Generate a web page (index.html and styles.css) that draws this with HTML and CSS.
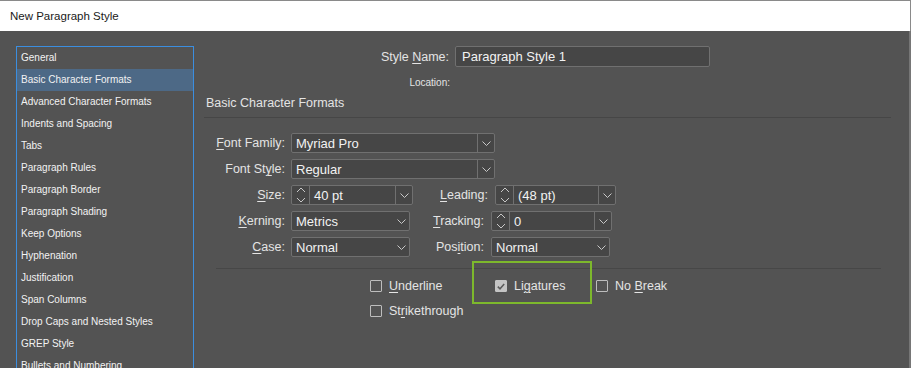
FILE: index.html
```html
<!DOCTYPE html>
<html lang="en">
<head>
    <meta charset="UTF-8">
    <title>New Paragraph Style</title>
    <link rel="stylesheet" href="styles.css">
</head>
<body>
<div class="dialog">
    <div class="titlebar">New Paragraph Style</div>

    <div class="main">
        <!-- left category list -->
        <ul class="nav">
            <li>General</li>
            <li class="sel">Basic Character Formats</li>
            <li>Advanced Character Formats</li>
            <li>Indents and Spacing</li>
            <li>Tabs</li>
            <li>Paragraph Rules</li>
            <li>Paragraph Border</li>
            <li>Paragraph Shading</li>
            <li>Keep Options</li>
            <li>Hyphenation</li>
            <li>Justification</li>
            <li>Span Columns</li>
            <li>Drop Caps and Nested Styles</li>
            <li>GREP Style</li>
            <li>Bullets and Numbering</li>
        </ul>

        <div class="panel">
            <div class="name-row">
                <span class="name-lbl">Style <u>N</u>ame:</span>
                <div class="field name-field">Paragraph Style 1</div>
            </div>
            <div class="loc-row"><span class="loc-lbl">Location:</span></div>

            <div class="heading">Basic Character Formats</div>
            <div class="rule1"></div>

            <div class="form">
                <div class="row">
                    <span class="lbl"><u>F</u>ont Family:</span>
                    <div class="field combo w-wide"><span class="val">Myriad Pro</span><span class="drop split"><svg width="9" height="5" viewBox="0 0 9 5"><path d="M0.5 0.5 L4.5 4.5 L8.5 0.5" fill="none" stroke="#c8c8c8" stroke-width="1"/></svg></span></div>
                </div>
                <div class="row">
                    <span class="lbl">Font St<u>y</u>le:</span>
                    <div class="field combo w-wide"><span class="val">Regular</span><span class="drop split"><svg width="9" height="5" viewBox="0 0 9 5"><path d="M0.5 0.5 L4.5 4.5 L8.5 0.5" fill="none" stroke="#c8c8c8" stroke-width="1"/></svg></span></div>
                </div>
                <div class="row">
                    <span class="lbl"><u>S</u>ize:</span>
                    <div class="field combo w-size">
                        <span class="spin"><svg width="10" height="16" viewBox="0 0 10 16"><path d="M1 5 L5 1 L9 5 M1 11 L5 15 L9 11" fill="none" stroke="#c8c8c8" stroke-width="1"/></svg></span>
                        <span class="val">40 pt</span>
                        <span class="drop split"><svg width="9" height="5" viewBox="0 0 9 5"><path d="M0.5 0.5 L4.5 4.5 L8.5 0.5" fill="none" stroke="#c8c8c8" stroke-width="1"/></svg></span>
                    </div>
                    <span class="lbl2"><u>L</u>eading:</span>
                    <div class="field combo w-lead">
                        <span class="spin"><svg width="10" height="16" viewBox="0 0 10 16"><path d="M1 5 L5 1 L9 5 M1 11 L5 15 L9 11" fill="none" stroke="#c8c8c8" stroke-width="1"/></svg></span>
                        <span class="val">(48 pt)</span>
                        <span class="drop split"><svg width="9" height="5" viewBox="0 0 9 5"><path d="M0.5 0.5 L4.5 4.5 L8.5 0.5" fill="none" stroke="#c8c8c8" stroke-width="1"/></svg></span>
                    </div>
                </div>
                <div class="row">
                    <span class="lbl"><u>K</u>erning:</span>
                    <div class="field combo w-sel"><span class="val">Metrics</span><span class="drop"><svg width="9" height="5" viewBox="0 0 9 5"><path d="M0.5 0.5 L4.5 4.5 L8.5 0.5" fill="none" stroke="#c8c8c8" stroke-width="1"/></svg></span></div>
                    <span class="lbl2 lbl2-b"><u>T</u>racking:</span>
                    <div class="field combo w-lead">
                        <span class="spin"><svg width="10" height="16" viewBox="0 0 10 16"><path d="M1 5 L5 1 L9 5 M1 11 L5 15 L9 11" fill="none" stroke="#c8c8c8" stroke-width="1"/></svg></span>
                        <span class="val">0</span>
                        <span class="drop split"><svg width="9" height="5" viewBox="0 0 9 5"><path d="M0.5 0.5 L4.5 4.5 L8.5 0.5" fill="none" stroke="#c8c8c8" stroke-width="1"/></svg></span>
                    </div>
                </div>
                <div class="row">
                    <span class="lbl"><u>C</u>ase:</span>
                    <div class="field combo w-sel"><span class="val">Normal</span><span class="drop"><svg width="9" height="5" viewBox="0 0 9 5"><path d="M0.5 0.5 L4.5 4.5 L8.5 0.5" fill="none" stroke="#c8c8c8" stroke-width="1"/></svg></span></div>
                    <span class="lbl2 lbl2-b">Pos<u>i</u>tion:</span>
                    <div class="field combo w-sel"><span class="val">Normal</span><span class="drop"><svg width="9" height="5" viewBox="0 0 9 5"><path d="M0.5 0.5 L4.5 4.5 L8.5 0.5" fill="none" stroke="#c8c8c8" stroke-width="1"/></svg></span></div>
                </div>
            </div>

            <div class="rule2"></div>

            <div class="checks">
                <div class="check-row">
                    <label class="chk c1"><span class="box"></span><span><u>U</u>nderline</span></label>
                    <label class="chk c2"><span class="box on"><svg width="8" height="7" viewBox="0 0 8 7"><path d="M0.8 3.6 L3 5.8 L7.2 1" fill="none" stroke="#5a5a5a" stroke-width="1.5"/></svg></span><span>Li<u>g</u>atures</span></label>
                    <label class="chk"><span class="box"></span><span>No <u>B</u>reak</span></label>
                </div>
                <div class="check-row">
                    <label class="chk"><span class="box"></span><span>St<u>r</u>ikethrough</span></label>
                </div>
                <!-- highlight around the Ligatures option -->
                <div class="callout"></div>
            </div>
        </div>
    </div>
</div>
</body>
</html>
```

FILE: styles.css
```css
body {
    margin: 0;
    background: #535353;
    font-family: "Liberation Sans", Arial, sans-serif;
}

.dialog {
    width: 911px;
    height: 368px;
    overflow: hidden;
    display: flex;
    flex-direction: column;
}

.titlebar {
    height: 30px;
    border-top: 1px solid #8a8a8a;
    border-right: 1px solid #8a8a8a;
    background: #fff;
    color: #1a1a1a;
    font-size: 11.5px;
    line-height: 30px;
    padding-left: 10px;
    flex: none;
}

.main {
    flex: 1;
    display: flex;
    background: #535353;
    border-right: 2px solid #767676;
}

/* カテゴリ一覧 */
.nav {
    list-style: none;
    margin: 15px 0 0 16px;
    padding: 0;
    width: 176px;
    border: 1px solid #3b8ee0;
    border-bottom: none;
    flex: none;
    font-size: 10px;
    color: #f2f2f2;
}

.nav li {
    height: 22px;
    line-height: 21px;
    padding-left: 4px;
    white-space: nowrap;
}

.nav .sel {
    background: #4d6986;
}

.panel {
    flex: 1;
    margin-left: 10px;
    position: relative;
    color: #e4e4e4;
    font-size: 12px;
}

.name-row {
    display: flex;
    align-items: center;
    margin-top: 15px;
    height: 21px;
}

.name-lbl {
    width: 245px;
    text-align: right;
    margin-right: 6px;
    font-size: 12.5px;
}

.field {
    background: #464646;
    border: 1px solid #707070;
    border-radius: 2px;
    color: #f2f2f2;
    font-size: 13px;
    box-sizing: border-box;
}

.name-field {
    width: 255px;
    height: 21px;
    line-height: 19px;
    padding-left: 6px;
}

.loc-row {
    height: 24px;
    line-height: 30px;
}

.loc-lbl {
    display: inline-block;
    width: 246px;
    text-align: right;
    font-size: 10px;
}

.heading {
    margin-top: 3px;
    margin-left: 2px;
    font-size: 12.5px;
    height: 19px;
    line-height: 19px;
    margin-bottom: 4px;
}

.rule1 {
    height: 1px;
    background: #464646;
    width: 687px;
}

.form {
    margin-top: 15px;
}

.row {
    display: flex;
    align-items: center;
    height: 20px;
    margin-bottom: 6px;
}

.row u, .chk u, .name-lbl u {
    text-decoration-thickness: 1px;
    text-underline-offset: 2px;
}

.lbl {
    width: 81px;
    text-align: right;
    margin-right: 6px;
    font-size: 12.5px;
    flex: none;
}

.lbl2 {
    width: 75px;
    text-align: right;
    margin-right: 7px;
    font-size: 12.5px;
    flex: none;
}

.lbl2-b {
    width: 74px;
    margin-right: 7px;
}

.combo {
    height: 20px;
    display: flex;
    align-items: center;
    flex: none;
}

.combo .val {
    flex: 1;
    padding-left: 4px;
    white-space: nowrap;
}

.spin {
    width: 17px;
    height: 18px;
    border-right: 1px solid #707070;
    display: flex;
    align-items: center;
    justify-content: center;
}

.drop {
    width: 16px;
    height: 18px;
    display: flex;
    align-items: center;
    justify-content: center;
}

.drop.split {
    border-left: 1px solid #707070;
}

.w-wide { width: 204px; }
.w-size { width: 122px; }
.w-lead { width: 121px; }
.w-sel  { width: 119px; }

.rule2 {
    height: 1px;
    background: #474747;
    width: 665px;
    margin-left: 12px;
    margin-top: 11px;
}

.checks {
    position: relative;
    margin-left: 166px;
    padding-top: 9px;
    font-size: 12.5px;
}

.check-row {
    display: flex;
    align-items: center;
    height: 16px;
    margin-bottom: 9px;
}

.chk {
    display: flex;
    align-items: center;
    white-space: nowrap;
}

.c1 { width: 125px; }
.c2 { width: 101px; }

.box {
    width: 10px;
    height: 10px;
    border: 1px solid #bdbdbd;
    border-radius: 1px;
    margin-right: 7px;
    display: flex;
    align-items: center;
    justify-content: center;
}

.box.on {
    background: #c4c4c4;
    border-color: #c4c4c4;
}

.callout {
    position: absolute;
    left: 102px;
    top: -8px;
    width: 116px;
    height: 39px;
    border: 2px solid #7db82c;
}
```
